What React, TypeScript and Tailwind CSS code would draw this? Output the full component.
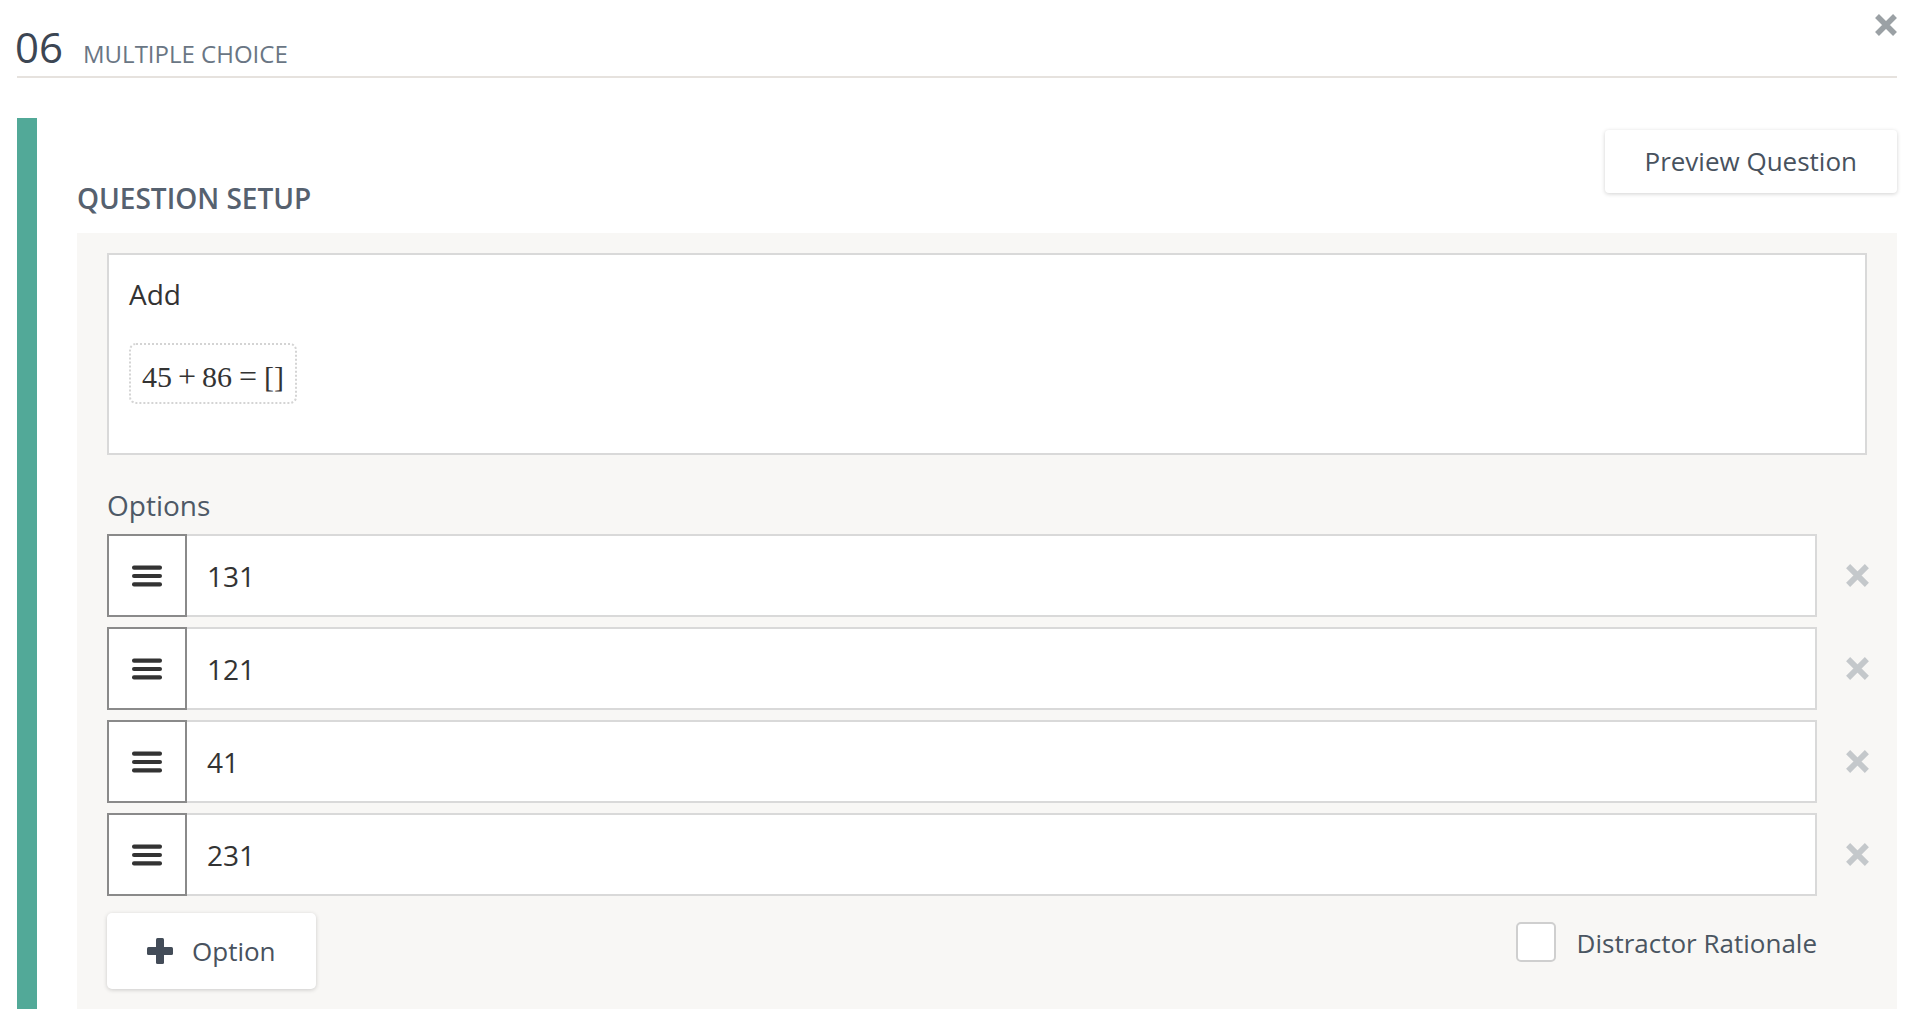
import React from 'react';

const OPTIONS = ["131", "121", "41", "231"];

function Cross({ size, color }: { size: number; color: string }) {
  return (
    <svg width={size} height={size} viewBox="0 0 24 24" fill="none">
      <path d="M3 3 L21 21 M21 3 L3 21" stroke={color} strokeWidth="5.5" strokeLinecap="butt" />
    </svg>
  );
}

function Bars() {
  return (
    <svg width="30" height="22" viewBox="0 0 30 22" fill="#333">
      <rect x="0" y="0.5" width="30" height="4.2" rx="2" />
      <rect x="0" y="8.9" width="30" height="4.2" rx="2" />
      <rect x="0" y="17.3" width="30" height="4.2" rx="2" />
    </svg>
  );
}

function Plus() {
  return (
    <svg width="26" height="26" viewBox="0 0 26 26" fill="#434c58">
      <rect x="9" y="0" width="8" height="26" rx="1.5" />
      <rect x="0" y="9" width="26" height="8" rx="1.5" />
    </svg>
  );
}

export default function App() {
  return (
    <div
      className="h-[1009px] overflow-hidden bg-white pl-[17px] pr-[15px] flex flex-col"
      style={{ fontFamily: '"Open Sans", "Liberation Sans", sans-serif' }}
    >
      {/* header */}
      <div className="h-[78px] shrink-0 border-b-2 border-[#e6e2de] flex justify-between items-start">
        <div className="flex items-baseline pt-[26px]">
          <span className="text-[42px] leading-none text-[#3c4653] -ml-[2px]">06</span>
          <span className="ml-[20px] text-[24px] leading-none text-[#6a7684]">MULTIPLE CHOICE</span>
        </div>
        <div className="mt-[13px] mr-[-1px]">
          <Cross size={24} color="#9ba1a5" />
        </div>
      </div>

      <div className="flex flex-1 mt-[40px] min-h-0">
        <div className="w-[20px] bg-[#52a998] shrink-0" />
        <div className="flex-1 flex flex-col pl-[40px] pt-[12px]">
          <div className="flex justify-between items-start">
            <h2 className="pt-[50px] text-[28px] leading-[36px] font-semibold text-[#56616f]">QUESTION SETUP</h2>
            <button className="h-[63px] px-[40px] bg-white rounded-[4px] text-[26px] text-[#48525e] shadow-[0_1px_4px_rgba(0,0,0,0.18)]">
              Preview Question
            </button>
          </div>

          <div className="mt-[17px] flex-1 bg-[#f8f7f5] pt-[20px] pl-[30px]">
            <div className="mr-[30px] h-[202px] border-2 border-[#d9d9d9] bg-white px-[20px] pt-[21px]">
              <div className="text-[28px] leading-[36px] text-[#333]">Add</div>
              <div className="mt-[31px] inline-flex items-start h-[61px] border-[2.5px] border-dotted border-[#d4d4d4] rounded-[7px] px-[11px] pt-[15px]">
                <span
                  className="text-[30px] leading-none text-[#333] whitespace-nowrap"
                  style={{ fontFamily: '"Liberation Serif", "DejaVu Serif", serif' }}
                >
                  45<span className="mx-[6px] text-[32px]">+</span>86<span className="mx-[7px] text-[32px]">=</span>[]
                </span>
              </div>
            </div>

            <div className="mt-[32px] text-[28px] leading-[36px] text-[#4e5966]">Options</div>

            <div className="mt-[11px] flex flex-col gap-[10px]">
              {OPTIONS.map((o) => (
                <div key={o} className="flex h-[83px]">
                  <div className="w-[80px] shrink-0 border-2 border-[#8a8a8a] bg-white flex items-center justify-center">
                    <Bars />
                  </div>
                  <div className="flex-1 border-y-2 border-r-2 border-[#d9d9d9] bg-white flex items-center pl-[20px] text-[28px] leading-[36px] text-[#333]">
                    {o}
                  </div>
                  <div className="w-[80px] shrink-0 flex items-center justify-center">
                    <Cross size={25} color="#c4c8cb" />
                  </div>
                </div>
              ))}
            </div>

            <div className="mt-[17px] mr-[80px] flex justify-between items-start">
              <button className="h-[76px] px-[40px] bg-white rounded-[5px] flex items-center gap-[19px] text-[26px] text-[#48525e] shadow-[0_1px_4px_rgba(0,0,0,0.18)]">
                <Plus />
                <span>Option</span>
              </button>
              <label className="mt-[8px] flex items-center gap-[21px]">
                <span className="w-[40px] h-[40px] border-2 border-[#cfcfcf] rounded-[5px] bg-white" />
                <span className="text-[26px] leading-[40px] pt-[2px] text-[#4a5561]">Distractor Rationale</span>
              </label>
            </div>
          </div>
        </div>
      </div>
    </div>
  );
}
